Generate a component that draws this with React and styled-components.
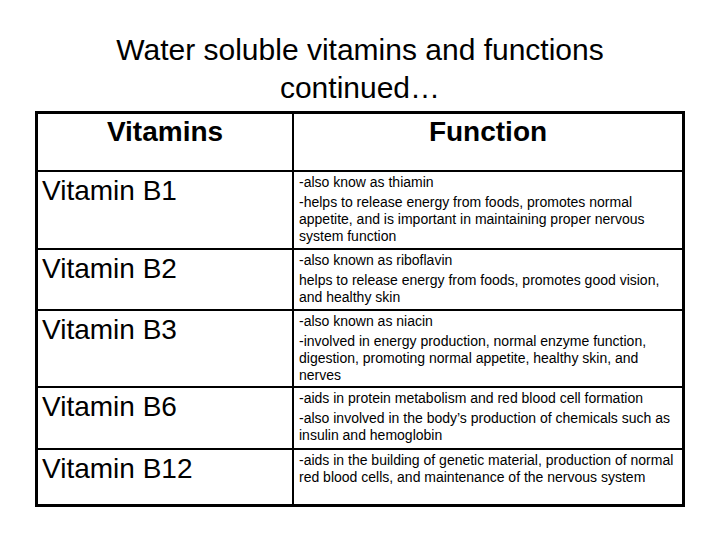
import React from 'react';
import styled, { createGlobalStyle } from 'styled-components';

const GlobalStyle = createGlobalStyle`
  body {
    margin: 0;
    background: #fff;
    font-family: "Liberation Sans", Arial, sans-serif;
    color: #000;
  }
`;

const Slide = styled.div`
  width: 720px;
  height: 540px;
  padding-top: 31px;
  box-sizing: border-box;
  display: flex;
  flex-direction: column;
  align-items: center;
`;

const Title = styled.h1`
  margin: 0 0 4px;
  font-size: 30px;
  font-weight: normal;
  line-height: 38px;
  text-align: center;
`;

// thin inner rules come from the black background showing through the gap
const Table = styled.div`
  display: grid;
  grid-template-columns: 254px 388px;
  grid-template-rows: ${p => p.$rows};
  gap: 2px;
  background: #000;
  border: 3px solid #000;
`;

const HeadCell = styled.div`
  background: #fff;
  padding-top: 2px;
  font-size: 28px;
  font-weight: bold;
  text-align: center;
`;

const NameCell = styled.div`
  background: #fff;
  padding: 3px 0 0 4px;
  font-size: 28px;
`;

const InfoCell = styled.div`
  background: #fff;
  padding: 2px 0 0 5px;
  font-size: 14px;
  line-height: 17px;
`;

const Para = styled.p`
  margin: 0 0 3px;
  white-space: nowrap;
`;

const vitamins = [
  {
    name: 'Vitamin B1',
    height: 76,
    notes: [
      ['-also know as thiamin'],
      [
        '-helps to release energy from foods, promotes normal',
        'appetite, and is important in maintaining proper nervous',
        'system function',
      ],
    ],
  },
  {
    name: 'Vitamin B2',
    height: 59,
    notes: [
      ['-also known as riboflavin'],
      ['helps to release energy from foods, promotes good vision,', 'and healthy skin'],
    ],
  },
  {
    name: 'Vitamin B3',
    height: 75,
    notes: [
      ['-also known as niacin'],
      [
        '-involved in energy production, normal enzyme function,',
        'digestion, promoting normal appetite, healthy skin, and',
        'nerves',
      ],
    ],
  },
  {
    name: 'Vitamin B6',
    height: 60,
    notes: [
      ['-aids in protein metabolism and red blood cell formation'],
      ['-also involved in the body\u2019s production of chemicals such as', 'insulin and hemoglobin'],
    ],
  },
  {
    name: 'Vitamin B12',
    height: 54,
    notes: [
      [
        '-aids in the building of genetic material, production of normal',
        'red blood cells, and maintenance of the nervous system',
      ],
    ],
  },
];

const App = () => {
  const rows = ['56px', ...vitamins.map(v => `${v.height}px`)].join(' ');

  return (
    <>
      <GlobalStyle />
      <Slide>
        <Title>
          Water soluble vitamins and functions
          <br />
          continued…
        </Title>
        <Table $rows={rows}>
          <HeadCell>Vitamins</HeadCell>
          <HeadCell>Function</HeadCell>
          {vitamins.map(v => (
            <React.Fragment key={v.name}>
              <NameCell>{v.name}</NameCell>
              <InfoCell>
                {v.notes.map((lines, i) => (
                  <Para key={i}>
                    {lines.map((line, j) => (
                      <React.Fragment key={j}>
                        {j > 0 && <br />}
                        {line}
                      </React.Fragment>
                    ))}
                  </Para>
                ))}
              </InfoCell>
            </React.Fragment>
          ))}
        </Table>
      </Slide>
    </>
  );
};

export default App;
